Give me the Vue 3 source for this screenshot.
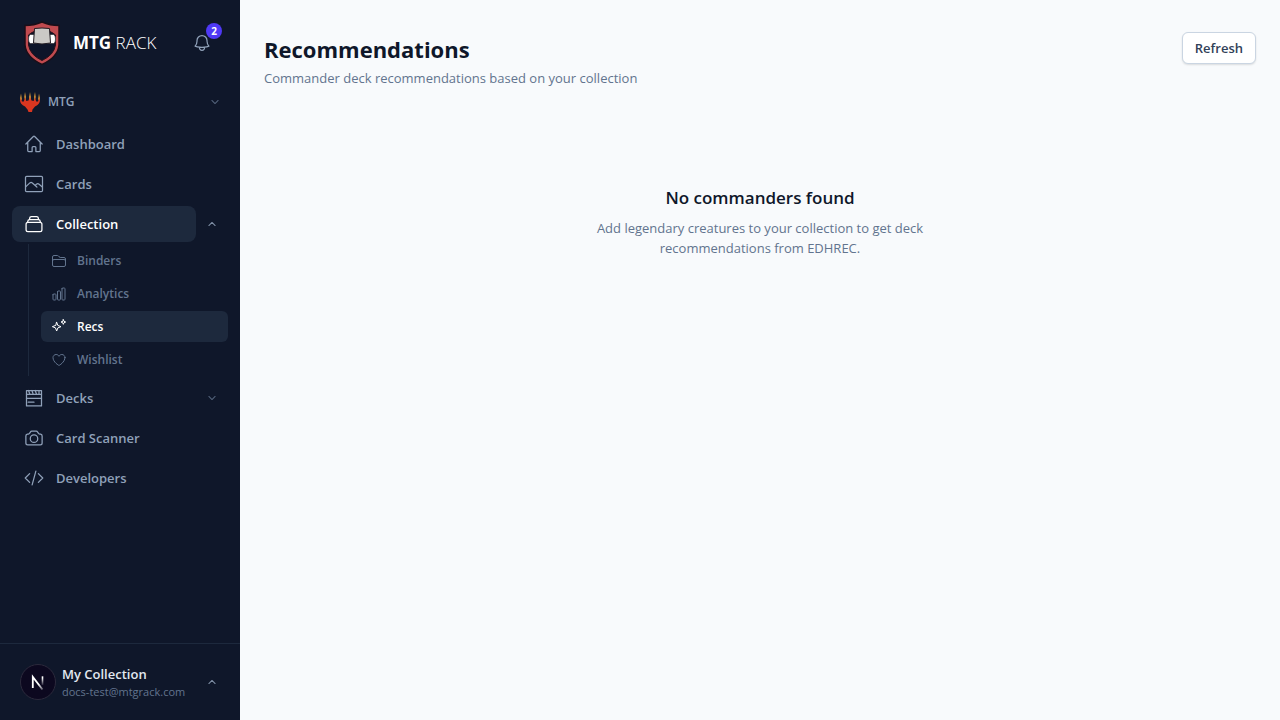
<script setup>
import { ref } from 'vue'

const icons = {
  home: ['m2.25 12 8.954-8.955c.44-.439 1.152-.439 1.591 0L21.75 12M4.5 9.75v10.125c0 .621.504 1.125 1.125 1.125H9.75v-4.875c0-.621.504-1.125 1.125-1.125h2.25c.621 0 1.125.504 1.125 1.125V21h4.125c.621 0 1.125-.504 1.125-1.125V9.75'],
  cards: ['M3.2 2.8h17.600q1.400 0 1.400 1.400v15.600q0 1.400-1.400 1.400H3.200q-1.400 0-1.400-1.400V4.200q0-1.400 1.400-1.400Z', 'm2 15.500 5-4.800q1.500-1.200 3 0l5.500 5-2-2 1.400-1.500q1.600-1.200 3.200 0l3.900 3.400'],
  collection: ['M5 10h14A2.250 2.250 0 0 1 21.500 12.250v6.500a2.250 2.250 0 0 1-2.250 2.250H4.750A2.250 2.250 0 0 1 2.500 18.750v-6.500A2.250 2.250 0 0 1 5 10Z', 'M4.500 10V8.900Q4.700 6.700 6.900 6.700h10.200q2.200 0 2.400 2.200V10', 'M6.800 6.500V5Q7 3 8.800 3h6.400Q17 3 17.200 5v1.500'],
  folder: ['M2.250 12.750V12A2.250 2.250 0 0 1 4.500 9.750h15A2.250 2.250 0 0 1 21.750 12v.750m-8.690-6.440-2.120-2.120a1.500 1.500 0 0 0-1.061-.440H4.500A2.250 2.250 0 0 0 2.250 6v12a2.250 2.250 0 0 0 2.250 2.250h15A2.250 2.250 0 0 0 21.750 18V9a2.250 2.250 0 0 0-2.250-2.250h-5.379a1.500 1.500 0 0 1-1.060-.440Z'],
  chart: ['M3 13.125C3 12.504 3.504 12 4.125 12h2.250c.621 0 1.125.504 1.125 1.125v6.750C7.500 20.496 6.996 21 6.375 21h-2.250A1.125 1.125 0 0 1 3 19.875v-6.750ZM9.750 8.625c0-.621.504-1.125 1.125-1.125h2.250c.621 0 1.125.504 1.125 1.125v11.250c0 .621-.504 1.125-1.125 1.125h-2.250a1.125 1.125 0 0 1-1.125-1.125V8.625ZM16.500 4.125c0-.621.504-1.125 1.125-1.125h2.250C20.496 3 21 3.504 21 4.125v15.750c0 .621-.504 1.125-1.125 1.125h-2.250a1.125 1.125 0 0 1-1.125-1.125V4.125Z'],
  sparkles: ['M8.500 5 10.300 9.700 15 11.500l-4.700 1.800L8.500 18l-1.800-4.700L2 11.500l4.700-1.800Z', 'M18.500 1 19.500 3.500 22 4.500l-2.500 1L18.500 8l-1-2.500L15 4.500l2.500-1Z'],
  heart: ['M21 8.250c0-2.485-2.099-4.500-4.688-4.500-1.935 0-3.597 1.126-4.312 2.733-.715-1.607-2.377-2.733-4.313-2.733C5.100 3.750 3 5.765 3 8.250c0 7.220 9 12 9 12s9-4.780 9-12Z'],
  deck: ['M3 3h18v18.500H3Z', 'M3 7.500h18M3 12.500h18M5 17h7', 'M5.500 3l1.500 4.500M9.500 3l1.500 4.500M13.500 3l1.500 4.500M18 3v4.500'],
  camera: ['M6.827 6.175A2.310 2.310 0 0 1 5.186 7.230c-.380.054-.757.112-1.134.175C2.999 7.580 2.250 8.507 2.250 9.574V18a2.250 2.250 0 0 0 2.250 2.250h15A2.250 2.250 0 0 0 21.750 18V9.574c0-1.067-.750-1.994-1.802-2.169a47.865 47.865 0 0 0-1.134-.175 2.310 2.310 0 0 1-1.640-1.055l-.822-1.316a2.192 2.192 0 0 0-1.736-1.039 48.774 48.774 0 0 0-5.232 0 2.192 2.192 0 0 0-1.736 1.039l-.821 1.316Z', 'M16.500 12.750a4.500 4.500 0 1 1-9 0 4.500 4.500 0 0 1 9 0Z'],
  code: ['M17.250 6.750 22.500 12l-5.250 5.250m-10.500 0L1.500 12l5.250-5.250m7.500-3-4.500 16.500']
}

const before = [
  { label: 'Dashboard', icon: 'home' },
  { label: 'Cards', icon: 'cards' }
]
const children = [
  { label: 'Binders', icon: 'folder' },
  { label: 'Analytics', icon: 'chart' },
  { label: 'Recs', icon: 'sparkles', active: true },
  { label: 'Wishlist', icon: 'heart' }
]
const after = [
  { label: 'Decks', icon: 'deck', expandable: true },
  { label: 'Card Scanner', icon: 'camera' },
  { label: 'Developers', icon: 'code' }
]
const open = ref(true)
</script>

<template>
  <div class="shell">
    <aside class="sidebar">
      <header class="brand">
        <a class="logo" href="#">
          <svg class="shield" viewBox="0 0 36 44" aria-hidden="true">
            <path d="M18 1 Q26 4.500 35 4.500 V24 Q34 36 18 43.500 Q2 36 1 24 V4.500 Q10 4.500 18 1Z" fill="#c04a4f" stroke="#1b0e18" stroke-width="1.500" />
            <path d="M4.500 14 Q10 9 18 9 Q26 9 31.500 14 V24 Q30 34 18 39.500 Q6 34 4.500 24Z" fill="#0d1429" stroke="#2b1019" />
            <path d="M10.500 13.500 H6.500 Q4.500 14 4.500 18 Q4.500 22 6.500 22.500 H10.500Z M25.500 13.500 H29.500 Q31.500 14 31.500 18 Q31.500 22 29.500 22.500 H25.500Z" fill="#fff" stroke="#211b22" stroke-width="0.600" />
            <path d="M10.500 7.500 Q18 6.500 25.500 7.500 L26.500 22 Q18 24 9.500 22Z" fill="#cbc9c6" stroke="#211b22" />
          </svg>
          <span class="name"><strong>MTG</strong> RACK</span>
        </a>
        <button class="bell" aria-label="Notifications, 2 unread">
          <svg class="i20 line" viewBox="0 0 24 24"><path d="M14.857 17.082a23.848 23.848 0 0 0 5.454-1.310A8.967 8.967 0 0 1 18 9.750V9A6 6 0 0 0 6 9v.750a8.967 8.967 0 0 1-2.312 6.022c1.733.640 3.560 1.085 5.455 1.310m5.714 0a24.255 24.255 0 0 1-5.714 0m5.714 0a3 3 0 1 1-5.714 0" /></svg>
          <span class="badge">2</span>
        </button>
      </header>

      <button class="game">
        <svg class="i20" viewBox="0 0 20 20" aria-hidden="true">
          <path d="M0 8 .8 5.500 2 9.500 3.800 9.500 5 5 6.300 9 8.500 8.500 10 4 11.500 8.500 13.700 9 15 5 16.200 9.500 18 9.500 19.200 5.500 20 8Q20 12 15 14.500L12.500 17.500 12 20H8.500L7.500 17.500 5 14.500Q0 12 0 8Z" fill="#d93620" />
          <path d="M1 1.500 1.800 7 1 8.500 .2 6ZM5 0 5.900 5 5.200 8 4.300 5ZM10 0 10.800 5 10 8 9.200 5ZM15 0 15.700 5 14.800 8 14.100 5ZM19 1.500 19.800 6 19 8.500 18.200 7Z" fill="#e5a03a" />
        </svg>
        <span class="grow">MTG</span>
        <svg class="i10 chev" viewBox="0 0 24 24"><path d="m19.500 8.250-7.500 7.500-7.500-7.500" /></svg>
      </button>

      <nav class="nav">
        <a v-for="item in before" :key="item.label" class="link" href="#">
          <svg class="i20 line" viewBox="0 0 24 24"><path v-for="d in icons[item.icon]" :key="d" :d="d" /></svg>{{ item.label }}
        </a>
        <div class="group">
          <div class="row">
            <a class="link active" href="#">
              <svg class="i20 line" viewBox="0 0 24 24"><path v-for="d in icons.collection" :key="d" :d="d" /></svg>Collection
            </a>
            <button class="toggle" aria-label="Toggle Collection" :aria-expanded="open" @click="open = !open">
              <svg class="i10 chev up" viewBox="0 0 24 24"><path d="m4.500 15.750 7.500-7.500 7.500 7.500" /></svg>
            </button>
          </div>
          <div v-if="open" class="sub">
            <a v-for="item in children" :key="item.label" class="sublink" :class="{ active: item.active }" href="#">
              <svg class="i16 line" viewBox="0 0 24 24"><path v-for="d in icons[item.icon]" :key="d" :d="d" /></svg>{{ item.label }}
            </a>
          </div>
        </div>
        <div v-for="item in after" :key="item.label" class="row">
          <a class="link" href="#">
            <svg class="i20 line" viewBox="0 0 24 24"><path v-for="d in icons[item.icon]" :key="d" :d="d" /></svg>{{ item.label }}
          </a>
          <button v-if="item.expandable" class="toggle" :aria-label="'Toggle ' + item.label">
            <svg class="i10 chev" viewBox="0 0 24 24"><path d="m19.500 8.250-7.500 7.500-7.500-7.500" /></svg>
          </button>
        </div>
      </nav>

      <footer class="foot">
        <button class="account">
          <svg class="avatar" viewBox="0 0 36 36" aria-hidden="true">
            <defs>
              <linearGradient id="fadeDiagonal" x1="14" y1="14" x2="24" y2="26" gradientUnits="userSpaceOnUse"><stop offset="0.500" stop-color="#fff" /><stop offset="1" stop-color="#fff" stop-opacity="0.200" /></linearGradient>
              <linearGradient id="fadeStem" x1="0" y1="12" x2="0" y2="22" gradientUnits="userSpaceOnUse"><stop offset="0.200" stop-color="#fff" /><stop offset="1" stop-color="#fff" stop-opacity="0" /></linearGradient>
            </defs>
            <circle cx="18" cy="18" r="17.500" fill="#0c081f" stroke="#2c2a3c" />
            <path d="M12.800 24V13L22.500 25.500" fill="none" stroke="url(#fadeDiagonal)" stroke-width="1.800" />
            <path d="M22.500 12.300V21" fill="none" stroke="url(#fadeStem)" stroke-width="1.600" />
          </svg>
          <span class="who"><strong>My Collection</strong><small>docs-test@mtgrack.com</small></span>
          <svg class="i10 chev up" viewBox="0 0 24 24"><path d="m4.500 15.750 7.500-7.500 7.500 7.500" /></svg>
        </button>
      </footer>
    </aside>

    <main class="main">
      <header class="head">
        <div>
          <h1>Recommendations</h1>
          <p>Commander deck recommendations based on your collection</p>
        </div>
        <button class="refresh">Refresh</button>
      </header>
      <section class="empty">
        <h2>No commanders found</h2>
        <p>Add legendary creatures to your collection to get deck recommendations from EDHREC.</p>
      </section>
    </main>
  </div>
</template>

<style>
body { background: #f8fafc; }
</style>

<style scoped>
* { box-sizing: border-box; }
.shell { display: flex; min-height: 100vh; background: #f8fafc; font-family: "Segoe UI", "Open Sans", "Noto Sans", sans-serif; font-size: 13px; line-height: 20px; color: #0f172a; }
button { border: 0; padding: 0; background: none; font: inherit; color: inherit; text-align: left; cursor: pointer; }
a { color: inherit; text-decoration: none; }
h1, h2, p { margin: 0; }
svg { display: block; flex: none; }
.i20 { width: 20px; height: 20px; }
.i16 { width: 16px; height: 16px; }
.i10 { width: 10px; height: 10px; }
.line, .chev { fill: none; stroke: currentColor; stroke-width: 1.5; stroke-linecap: round; stroke-linejoin: round; }
.chev { stroke-width: 2.5; color: #52627a; }
.chev.up { color: #7f8fa5; }
.grow { flex: 1; }

.sidebar { display: flex; flex-direction: column; width: 240px; flex: none; background: #0f172a; color: #90a1b9; }
.brand { display: flex; align-items: center; justify-content: space-between; height: 86px; padding: 0 28px 0 24px; }
.logo { display: flex; align-items: center; gap: 13px; color: #fff; }
.shield { width: 36px; height: 44px; }
.name { font-size: 17px; line-height: 28px; font-weight: 300; }
.name strong { font-weight: 700; }
.bell { position: relative; }
.badge { position: absolute; top: -10px; right: -10px; width: 16px; height: 16px; border-radius: 50%; background: #4f39f6; color: #fff; font-size: 10px; line-height: 16px; font-weight: 700; text-align: center; }
.game { display: flex; align-items: center; gap: 8px; height: 32px; padding: 0 20px; font-size: 12px; font-weight: 600; }
.nav { display: flex; flex-direction: column; gap: 4px; padding: 8px 12px; flex: 1; font-weight: 600; }
.row { display: flex; align-items: center; }
.link { display: flex; flex: 1; align-items: center; gap: 12px; padding: 8px 12px; border-radius: 8px; }
.nav > .link { flex: none; }
.link.active, .sublink.active { background: #1d293d; color: #fff; }
.toggle { display: flex; align-items: center; justify-content: center; width: 32px; height: 32px; }
.sub { display: flex; flex-direction: column; gap: 2px; margin: 2px 0 0 16px; padding: 1px 0 1px 12px; border-left: 1px solid #1d293d; }
.sublink { display: flex; align-items: center; gap: 10px; padding: 6px 10px; border-radius: 6px; color: #62748e; font-size: 12px; line-height: 19px; font-weight: 600; }
.foot { border-top: 1px solid #1d293d; padding: 20px; }
.account { display: flex; align-items: center; gap: 6px; width: 100%; padding-right: 3px; }
.avatar { width: 36px; height: 36px; }
.who { display: flex; flex: 1; flex-direction: column; }
.who strong { font-weight: 600; color: #e2e8f0; }
.who small { font-size: 11px; line-height: 16px; color: #62748e; }

.main { flex: 1; min-width: 0; padding: 32px 24px; }
.head { display: flex; align-items: flex-start; justify-content: space-between; }
h1 { font-size: 22px; line-height: 34px; font-weight: 700; }
.head p, .empty p { color: #62748e; }
.head p { margin-top: 2px; }
.refresh { padding: 5px 12px; border: 1px solid #cad5e2; border-radius: 6px; background: #fff; color: #314158; font-weight: 600; box-shadow: 0 1px 2px rgb(0 0 0 / 12%); }
.empty { max-width: 384px; margin: 96px auto 0; text-align: center; }
h2 { font-size: 17px; line-height: 28px; font-weight: 600; }
.empty p { margin-top: 6px; }
</style>
